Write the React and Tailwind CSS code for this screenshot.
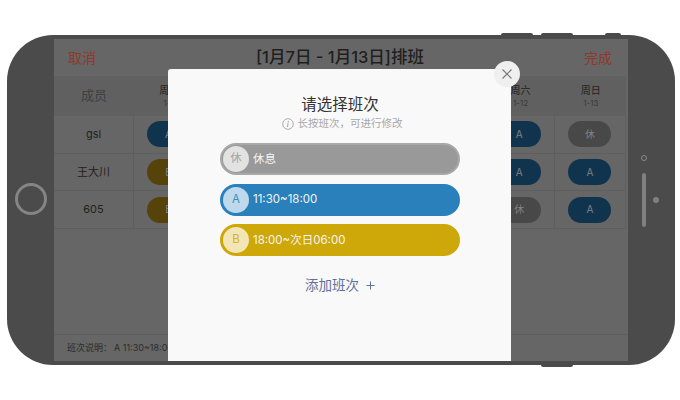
const FONT = "font-['Inter','Noto_Sans_CJK_SC',sans-serif]";

const days = [
  ['周一', '1-7'], ['周二', '1-8'], ['周三', '1-9'], ['周四', '1-10'],
  ['周五', '1-11'], ['周六', '1-12'], ['周日', '1-13'],
];

const rows = [
  ['gsl', ['A', 'A', 'A', 'A', 'A', 'A', '休']],
  ['王大川', ['B', 'A', 'A', 'A', 'A', 'A', 'A']],
  ['605', ['B', 'A', 'A', 'A', 'A', '休', 'A']],
];

const pillClass = {
  A: 'bg-[#11344e]',
  B: 'bg-[#55430a]',
  休: 'bg-[#484848]',
};

function Shift({ tag, label, bar, ring, disc, text }) {
  return (
    <div className={`flex h-8 w-60 items-center rounded-full border-2 ${bar} ${ring}`}>
      <div className={`ml-[1px] flex h-[26px] w-[26px] items-center justify-center rounded-full text-[11.5px] ${disc} ${text}`}>
        {tag}
      </div>
      <span className="ml-[4px] pt-[1px] text-[11.5px] text-[#f4f4f4]">{label}</span>
    </div>
  );
}

export default function App() {
  return (
    <div className={`h-[400px] w-[680px] overflow-hidden bg-white pl-[7px] pt-[35px] ${FONT}`}>
      <div className="relative flex h-[330px] w-[668px] justify-center rounded-[46px] bg-[#4b4b4b] py-1">
        <div className="absolute left-[494px] top-[-2px] h-[2px] w-8 rounded-t bg-[#4b4b4b]" />
        <div className="absolute left-[534px] top-[-2px] h-[2px] w-8 rounded-t bg-[#4b4b4b]" />
        <div className="absolute left-[598px] top-[-2px] h-[2px] w-4 rounded-t bg-[#4b4b4b]" />
        <div className="absolute left-[534px] bottom-[-2px] h-[2px] w-8 rounded-b bg-[#4b4b4b]" />
        <div className="absolute left-[8px] top-[148px] h-8 w-8 rounded-full border-[3px] border-[#858585]" />
        <div className="absolute left-[634px] top-[120px] h-[6px] w-[6px] rounded-full border border-[#8a8a8a]" />
        <div className="absolute left-[635px] top-[138px] h-[54px] w-[4px] rounded-full bg-[#808080]" />
        <div className="absolute left-[646px] top-[162px] h-[6px] w-[6px] rounded-full bg-[#808080]" />

        <div className="relative flex w-[574px] flex-col bg-[#666666]">
          <div className="flex h-[37px] items-center justify-between pb-[1px] pl-[14px] pr-[16px]">
            <span className="text-[14px] text-[#8d3a2a]">取消</span>
            <span className="text-[16.5px] font-medium text-[#1f1f1f]">[1月7日 - 1月13日]排班</span>
            <span className="text-[14px] text-[#8d3a2a]">完成</span>
          </div>

          <div className="grid h-10 w-[572px] grid-cols-[80px_repeat(7,1fr)] bg-[#606060]">
            <div className="flex items-center justify-center text-[13px] text-[#3f3f3f]">成员</div>
            {days.map(([d, date]) => (
              <div key={d} className="flex flex-col items-center justify-center pt-[1px]">
                <span className="text-[10px] leading-[14px] text-[#222222]">{d}</span>
                <span className="text-[8px] leading-[13px] text-[#3a3a3a]">{date}</span>
              </div>
            ))}
          </div>

          <div className="w-[572px] border-r border-[#5e5e5e]">
            {rows.map(([name, cells]) => (
              <div key={name} className="grid h-[37.7px] grid-cols-[80px_repeat(7,1fr)] border-b border-[#5e5e5e]">
                <div className="flex items-center justify-center border-r border-[#5e5e5e] text-[11px] text-[#222222]">{name}</div>
                {cells.map((c, i) => (
                  <div key={i} className="flex items-center justify-center border-r border-[#5e5e5e] last:border-r-0">
                    <div className={`flex h-[26px] w-[43px] items-center justify-center rounded-full text-[10px] text-[#808080] ${pillClass[c]}`}>
                      {c}
                    </div>
                  </div>
                ))}
              </div>
            ))}
          </div>

          <div className="mt-auto flex h-[27px] items-center border-t border-[#5e5e5e] pl-[13px] text-[9px] text-[#2c2c2c]">
            <span>班次说明：</span>
            <span className="ml-[2px] whitespace-pre">A 11:30~18:00  B 18:00~次日06:00</span>
          </div>

          <div className="absolute bottom-0 left-[114px] top-[30px] flex w-[343px] flex-col items-center rounded-t-[3px] bg-[#f9f9f9] pl-[1px]">
            <div className="mt-[26px] text-[15.5px] leading-5 text-[#333333]">请选择班次</div>
            <div className="mt-[1px] ml-[4px] flex items-center text-[10.5px] leading-4 text-[#a8a8a8]">
              <svg width="12" height="12" viewBox="0 0 12 12" fill="none" className="mr-[4px]">
                <circle cx="6" cy="6" r="5.3" stroke="#9b9b9b" strokeWidth="0.8" />
                <path d="M6.3 3.2v.7M6 5.2 5.6 8.6" stroke="#9b9b9b" strokeWidth="0.9" strokeLinecap="round" />
              </svg>
              长按班次，可进行修改
            </div>
            <div className="mt-[11px] flex flex-col gap-[8.5px]">
              <Shift tag="休" label="休息" bar="bg-[#999999]" ring="border-[#a8a8a8]" disc="bg-[#e2e2e2]" text="text-[#a5a5a5]" />
              <Shift tag="A" label="11:30~18:00" bar="bg-[#2a80bb]" ring="border-[#2a80bb]" disc="bg-[#bed9ec]" text="text-[#3f8cc2]" />
              <Shift tag="B" label="18:00~次日06:00" bar="bg-[#cea708]" ring="border-[#cea708]" disc="bg-[#f2e6b6]" text="text-[#d4b030]" />
            </div>
            <div className="mt-[20px] flex items-center text-[13.5px] leading-[18px] text-[#5f6f9c]">
              添加班次
              <svg width="9" height="9" viewBox="0 0 9 9" fill="none" className="ml-[7px]">
                <path d="M4.5 0.5v8M0.5 4.5h8" stroke="#5f6f9c" strokeWidth="1" />
              </svg>
            </div>
          </div>

          <div className="absolute left-[440px] top-[22px] flex h-[26px] w-[26px] items-center justify-center rounded-full bg-[#efefef]">
            <svg width="12" height="12" viewBox="0 0 12 12" fill="none">
              <path d="M1.5 1.5l9 9M10.5 1.5l-9 9" stroke="#7a7a7a" strokeWidth="1.2" />
            </svg>
          </div>
        </div>
      </div>
    </div>
  );
}
